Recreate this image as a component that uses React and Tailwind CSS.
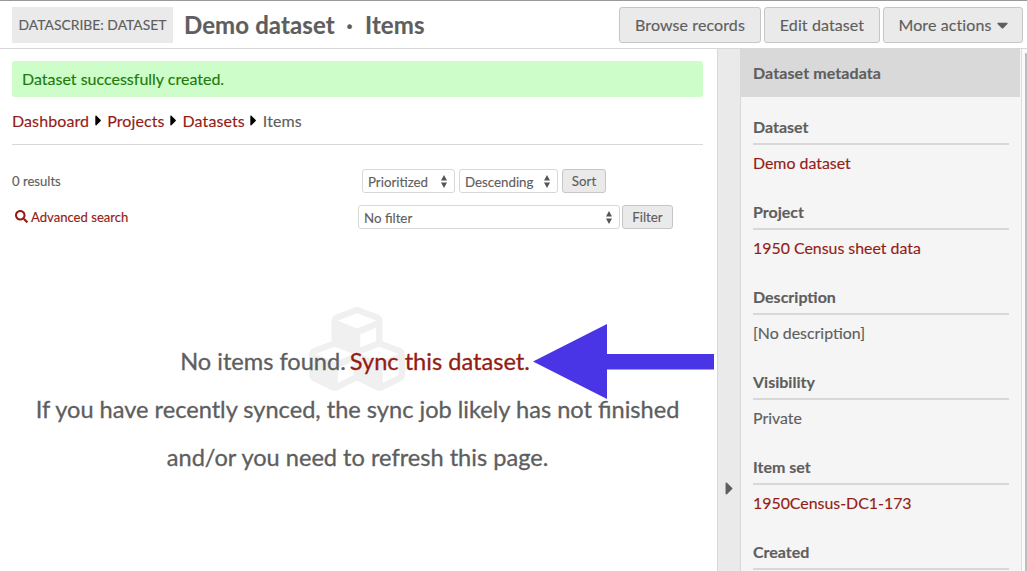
import { FaCaretDown, FaCaretRight, FaCubes, FaSearch } from "react-icons/fa";

const metadata = [
  { label: "Dataset", value: "Demo dataset", link: true },
  { label: "Project", value: "1950 Census sheet data", link: true },
  { label: "Description", value: "[No description]" },
  { label: "Visibility", value: "Private" },
  { label: "Item set", value: "1950Census-DC1-173", link: true },
  { label: "Created", value: "" },
];

function HeaderButton({ className, children }) {
  return (
    <button
      className={`flex h-9 items-center justify-center whitespace-nowrap rounded-[3px] border border-[#c6c6c6] bg-[#eaeaea] text-base tracking-[0.1px] ${className}`}
    >
      {children}
    </button>
  );
}

function SmallButton({ className, children }) {
  return (
    <button
      className={`flex h-6 items-center justify-center rounded-[3px] border border-[#c6c6c6] bg-[#eaeaea] pt-px text-[13.3px] ${className}`}
    >
      {children}
    </button>
  );
}

function SelectBox({ className, children }) {
  return (
    <div
      className={`flex h-6 items-center justify-between rounded-[3px] border border-[#d8d8d8] bg-white pl-[5px] pr-[7px] text-[13.3px] ${className}`}
    >
      <span className="pt-[3px]">{children}</span>
      <svg className="h-[13px] w-[6px]" viewBox="0 0 6 13" fill="#555">
        <path d="M3 0 6 5.5H0ZM3 13 0 7.5H6Z" />
      </svg>
    </div>
  );
}

function Crumb({ children }) {
  return (
    <>
      <a className="text-[#941c14]">{children}</a>
      <span className="flex w-[18px] justify-center">
        <FaCaretRight className="h-[17px] w-[7px] text-black" />
      </span>
    </>
  );
}

export default function App() {
  return (
    <div className="flex h-[571px] w-[1027px] flex-col overflow-hidden bg-white font-['Lato',sans-serif] text-base text-[#5e5e5e] [-webkit-text-stroke:0.15px]">
      <header className="flex h-[49px] shrink-0 justify-between border-b border-t border-b-[#d8d8d8] border-t-[#999] pl-3 pr-1 pt-[6px]">
        <div className="flex h-9 items-center">
          <span className="flex h-9 w-[161px] items-center justify-center whitespace-nowrap bg-[#eaeaea] text-[13.9px]">
            DATASCRIBE: DATASET
          </span>
          <h1 className="ml-[11px] flex whitespace-nowrap text-2xl font-bold tracking-[0.1px]">
            <span className="w-[150px]">Demo dataset</span>
            <span className="w-[31px] text-center">·</span>
            <span>Items</span>
          </h1>
        </div>
        <div className="flex gap-[3px]">
          <HeaderButton className="w-[142px]">Browse records</HeaderButton>
          <HeaderButton className="w-[116px]">Edit dataset</HeaderButton>
          <HeaderButton className="w-[140px] gap-[5px]">
            More actions
            <FaCaretDown className="h-[18px] w-[11px]" />
          </HeaderButton>
        </div>
      </header>

      <div className="flex min-h-0 flex-1">
        <main className="w-[717px] shrink-0 pl-3 pr-[14px] pt-3">
          <div className="flex h-9 items-center rounded-[3px] bg-[#cdfdc8] px-[10px] text-[#1f7a0c]">
            Dataset successfully created.
          </div>
          <nav className="flex h-12 items-center border-b border-[#d8d8d8] tracking-[0.1px]">
            <Crumb>Dashboard</Crumb>
            <Crumb>Projects</Crumb>
            <Crumb>Datasets</Crumb>
            <span>Items</span>
          </nav>

          <div className="mt-6 flex h-6 items-center text-[13.1px]">
            <span className="w-[350px] pt-[2px]">0 results</span>
            <SelectBox className="w-[93px]">Prioritized</SelectBox>
            <SelectBox className="ml-1 w-[99px]">Descending</SelectBox>
            <SmallButton className="ml-1 w-11">Sort</SmallButton>
          </div>
          <div className="mt-3 flex h-6 items-center text-[13.1px]">
            <a className="flex w-[346px] items-center gap-[3px] pl-[3px] text-[#941c14]">
              <FaSearch className="size-[13px]" />
              <span className="pt-[2px]">Advanced search</span>
            </a>
            <SelectBox className="w-[262px]">No filter</SelectBox>
            <SmallButton className="ml-[2px] w-[51px]">Filter</SmallButton>
          </div>

          <div className="relative mt-[108px] text-center text-[23.6px] leading-[48px] [-webkit-text-stroke:0.3px]">
            <FaCubes className="absolute left-[297px] top-[-36px] size-24 text-[#f0f0f0]" />
            <p className="relative whitespace-nowrap pr-[5px]">
              No items found. <a className="ml-[-2px] text-[#941c14]">Sync this dataset.</a>
            </p>
            <p className="relative whitespace-nowrap">
              If you have recently synced, the sync job likely has not finished
            </p>
            <p className="relative whitespace-nowrap">and/or you need to refresh this page.</p>
            <svg
              className="absolute left-[521px] top-[-13px] h-[75px] w-[181px]"
              viewBox="0 0 181 75"
              fill="#4a35e6"
            >
              <path d="M0 37.5 74 0V30H181V45.5H74V75Z" />
            </svg>
          </div>
        </main>

        <div className="flex w-6 shrink-0 justify-center border-x border-[#d8d8d8] bg-[#eaeaea] pt-[429px]">
          <FaCaretRight className="h-[21px] w-[9px]" />
        </div>

        <aside className="w-[281px] shrink-0 border-r border-[#dedede] bg-[#f5f5f5]">
          <h2 className="mr-px flex h-12 items-center bg-[#d9d9d9] pl-3 font-bold tracking-[0.1px]">
            Dataset metadata
          </h2>
          <dl className="pl-3 pr-3 pt-[18px]">
            {metadata.map((item) => (
              <div key={item.label} className="h-[85px]">
                <dt className="h-[30px] border-b-2 border-[#d8d8d8] font-bold leading-6">
                  {item.label}
                </dt>
                <dd className={`pt-[6px] text-[15.9px] leading-6 ${item.link ? "text-[#941c14]" : ""}`}>
                  {item.value}
                </dd>
              </div>
            ))}
          </dl>
        </aside>
        <div className="flex flex-1 justify-end bg-[#fafafa] pt-1">
          <div className="w-[2px] rounded-t bg-[#bdbdbd]" />
        </div>
      </div>
    </div>
  );
}
